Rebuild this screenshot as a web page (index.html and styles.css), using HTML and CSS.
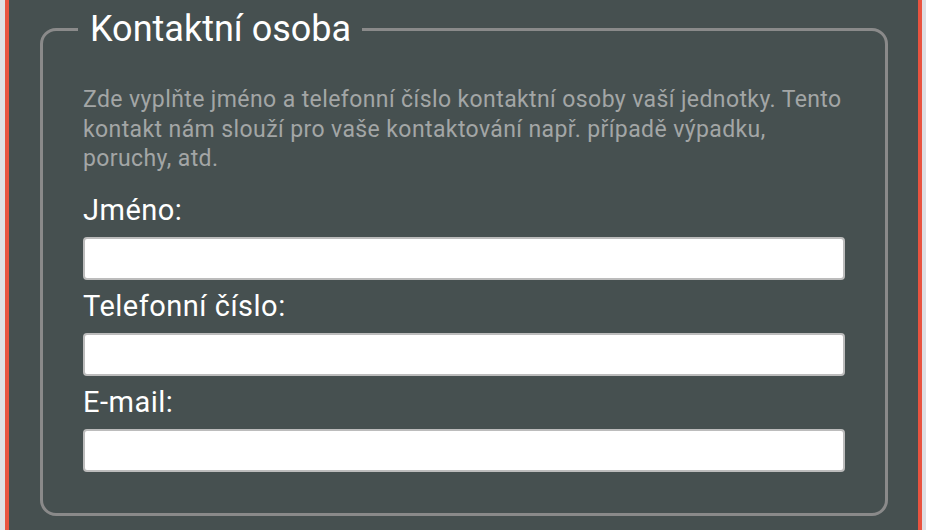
FILE: index.html
```html
<!DOCTYPE html>
<html lang="cs">
<head>
<meta charset="utf-8">
<link rel="stylesheet" href="styles.css">
</head>
<body>
<div class="panel">
  <fieldset class="box">
    <legend class="box-title">Kontaktní osoba</legend>
    <p class="hint">Zde vyplňte jméno a telefonní číslo kontaktní osoby vaší jednotky. Tento kontakt nám slouží pro vaše kontaktování např. případě výpadku, poruchy, atd.</p>
    <label class="field-label" for="name">Jméno:</label>
    <input class="field-input" id="name" type="text">
    <label class="field-label" for="phone">Telefonní číslo:</label>
    <input class="field-input" id="phone" type="text">
    <label class="field-label" for="email">E-mail:</label>
    <input class="field-input" id="email" type="text">
  </fieldset>
</div>
</body>
</html>
```
FILE: styles.css
```css
html, body {
  margin: 0;
  padding: 0;
  height: 100%;
}
body {
  background: #dfdfe3;
  padding: 0 4px 0 5px;
  box-sizing: border-box;
  font-family: Roboto, "Liberation Sans", sans-serif;
  overflow: hidden;
}
.panel {
  background: #465050;
  border-left: 4px solid #e9533f;
  border-right: 4px solid #e9533f;
  height: 100%;
  padding: 8px 30px 0 31px;
  box-sizing: border-box;
}
.box {
  margin: 0;
  border: 3px solid #8a8a8a;
  border-radius: 16px;
  padding: 35px 40px 41px 40px;
  min-width: 0;
}
.box-title {
  font-size: 36px;
  line-height: 42px;
  color: #ffffff;
  padding: 0 11px 0 12px;
  margin-left: -5px;
}
.hint {
  margin: 0 0 10px 0;
  font-size: 23px;
  letter-spacing: 0.4px;
  line-height: 29.5px;
  color: #a3a6a6;
}
.field-label {
  display: block;
  font-size: 29px;
  letter-spacing: 0.5px;
  line-height: 53px;
  height: 53px;
  color: #ffffff;
  margin-top: -10px;
  padding-top: 10px;
  box-sizing: content-box;
}
.field-label:first-of-type {
  margin-top: 0;
  padding-top: 0;
}
.field-input {
  display: block;
  width: 100%;
  height: 43px;
  box-sizing: border-box;
  margin: 0;
  background: #ffffff;
  border: 2px solid #bcbcbc;
  border-radius: 4px;
  font-size: 20px;
}
```
